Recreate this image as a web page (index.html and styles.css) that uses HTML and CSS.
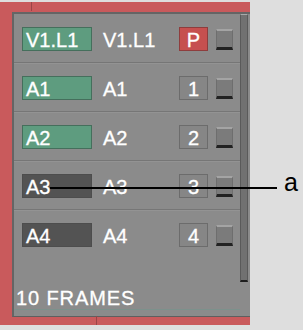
FILE: index.html
```html
<!DOCTYPE html>
<html lang="en">
<head>
<meta charset="UTF-8">
<title>Tracks</title>
<link rel="stylesheet" href="styles.css">
</head>
<body>
<div class="frame">
    <div class="seam seam-top"></div>
    <div class="seam seam-bottom"></div>
    <div class="panel">
        <div class="tracks">
            <div class="track">
                <div class="name green">V1.L1</div>
                <div class="label">V1.L1</div>
                <div class="num red">P</div>
                <div class="btn"></div>
            </div>
            <div class="track">
                <div class="name green">A1</div>
                <div class="label">A1</div>
                <div class="num">1</div>
                <div class="btn"></div>
            </div>
            <div class="track">
                <div class="name green">A2</div>
                <div class="label">A2</div>
                <div class="num">2</div>
                <div class="btn"></div>
            </div>
            <div class="track">
                <div class="name dark">A3</div>
                <div class="label">A3</div>
                <div class="num">3</div>
                <div class="btn"></div>
            </div>
            <div class="track last">
                <div class="name dark">A4</div>
                <div class="label">A4</div>
                <div class="num">4</div>
                <div class="btn"></div>
            </div>
            <div class="frames">10 FRAMES</div>
        </div>
        <div class="scroll"></div>
    </div>
</div>

<!-- callout -->
<div class="callout-line"></div>
<div class="callout-text">a</div>
</body>
</html>
```

FILE: styles.css
```css
body {
    margin: 0;
    width: 303px;
    height: 330px;
    overflow: hidden;
    background-color: #dedede;
    font-family: "Liberation Sans", Arial, sans-serif;
    position: relative;
}
.frame {
    position: relative;
    margin: 2px 0 0 0;
    width: 250px;
    height: 323px;
    box-sizing: border-box;
    padding: 10px 0 0 12px;
    background-color: #c95a5c;
}
.seam {
    position: absolute;
    left: 31px;
    width: 1px;
    height: 9px;
    background-color: #9a4446;
}
.seam-top { top: 0; }
.seam-bottom { left: 96px; bottom: 0; }
.panel {
    display: flex;
    width: 238px;
    height: 305px;
    box-sizing: border-box;
    background-color: #8b8b8b;
    border-top: 2px solid #656565;
    border-left: 2px solid #656565;
    border-bottom: 1px solid #5f5f5f;
}
.tracks {
    width: 226px;
    display: flex;
    flex-direction: column;
}
.track {
    height: 49px;
    display: flex;
    align-items: flex-start;
    padding-left: 8px;
    box-sizing: border-box;
    padding-top: 13px;
    border-bottom: 1px solid #767676;
    box-shadow: 0 1px 0 #939393;
}
.track.last {
    border-bottom: none;
    box-shadow: none;
}
.name, .label, .num, .frames {
    -webkit-text-stroke: 0.3px #fff;
}
.name {
    width: 70px;
    height: 24px;
    box-sizing: border-box;
    padding: 2px 0 0 3px;
    font-size: 20px;
    line-height: 21px;
    color: #fff;
    border: 1px solid #456f5c;
}
.green {
    background-color: #5e9c7f;
}
.dark {
    background-color: #535353;
    border-color: #4d4d4d;
}
.label {
    width: 76px;
    margin-left: 11px;
    padding-top: 3px;
    font-size: 20px;
    line-height: 21px;
    color: #fff;
}
.num {
    width: 29px;
    height: 24px;
    box-sizing: border-box;
    padding-top: 2px;
    text-align: center;
    font-size: 20px;
    line-height: 21px;
    color: #fff;
    background-color: #868686;
    border: 1px solid #6c6c6c;
}
.num.red {
    background-color: #c6504f;
    border-color: #8e3d3d;
}
.btn {
    width: 17px;
    height: 21px;
    margin: 2px 0 0 8px;
    box-sizing: border-box;
    background-color: #7b7b7b;
    border-top: 2px solid #a4a4a4;
    border-left: 1px solid #6e6e6e;
    border-right: 1px solid #6e6e6e;
    border-bottom: 3px solid #222;
}
.frames {
    margin-top: auto;
    padding: 0 0 0 2px;
    font-size: 20px;
    letter-spacing: 0.9px;
    line-height: 22px;
    color: #fff;
    border-bottom: 1px solid #7c918c;
    margin-bottom: 6px;
}
.scroll {
    width: 8px;
    height: 268px;
    margin-left: 0;
    box-sizing: border-box;
    background-color: #717171;
    border-left: 1px solid #5a5a5a;
    border-right: 1px solid #5a5a5a;
    border-top: 1px solid #a9a9a9;
    border-bottom: 2px solid #1e1e1e;
}
/* linha de chamada */
.callout-line {
    position: absolute;
    left: 50px;
    top: 187px;
    width: 227px;
    height: 2px;
    background-color: #000;
}
.callout-text {
    position: absolute;
    left: 284px;
    top: 168px;
    font-size: 25px;
    line-height: 28px;
    color: #000;
}
```
